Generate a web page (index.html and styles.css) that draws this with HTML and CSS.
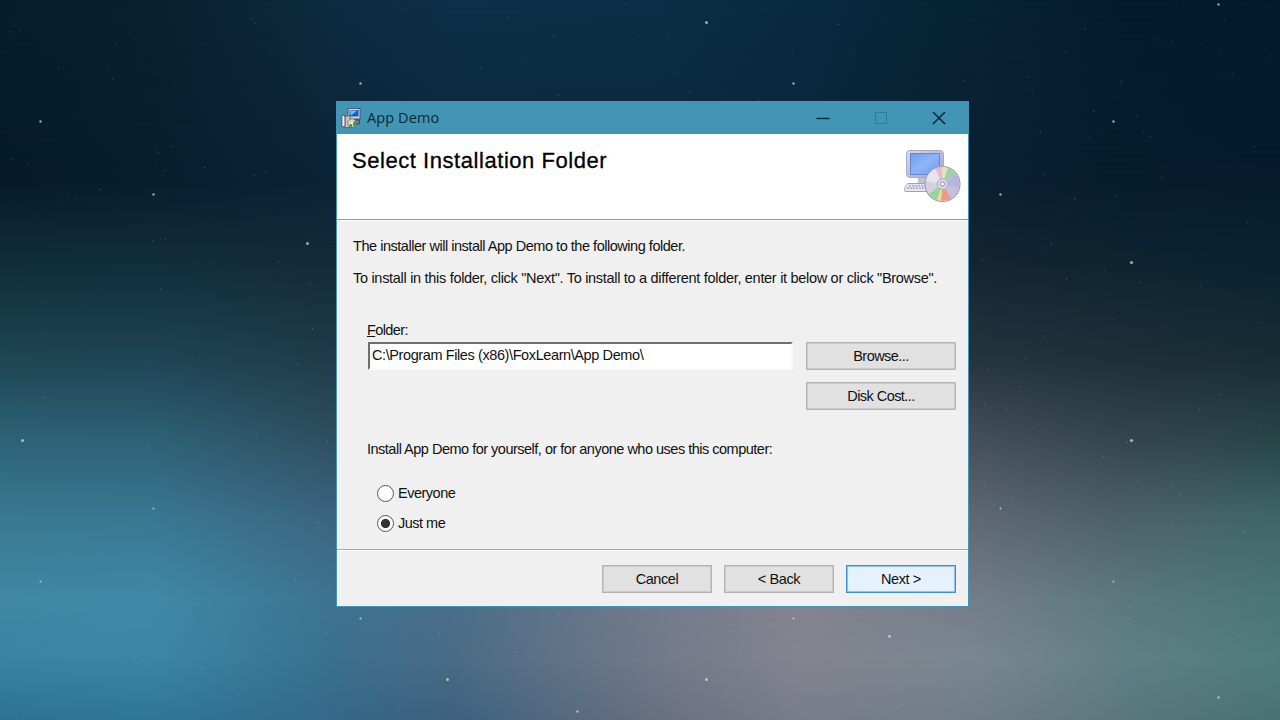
FILE: index.html
```html
<!DOCTYPE html>
<html lang="en">
<head>
  <meta charset="UTF-8">
  <meta name="viewport" content="width=device-width, initial-scale=1">
  <title>App Demo</title>
  <link rel="stylesheet" href="styles.css">
</head>
<body>
  <div class="sky" id="sky"></div>
  <svg class="stars" id="stars" width="1280" height="720" aria-hidden="true"></svg>

  <main class="window">
    <header class="titlebar">
      <svg class="app-icon" width="20" height="20" viewBox="0 0 20 20">
        <rect x="7" y="0.5" width="12" height="10.5" fill="#d5d4e0" stroke="#3b4657" stroke-width="0.8"/>
        <rect x="8.5" y="2" width="9" height="6.5" fill="#1261bd"/>
        <path d="M9 2.500h7l-6 5z" fill="#72c0f4"/>
        <path d="M9 12h9.500v4H15z" fill="#7f7899" stroke="#322f42" stroke-width="0.7"/>
        <rect x="4" y="8" width="5" height="11.500" fill="#c9c7c7" stroke="#525966" stroke-width="0.8"/>
        <path d="M0.800 8l2-1 1.200 2v9l-2 1-1.200-1z" fill="#eceaea" stroke="#3b4250" stroke-width="0.8"/>
        <circle cx="11" cy="15" r="4.300" fill="#d9d7a8" stroke="#50584a" stroke-width="0.6"/>
        <path d="M11 15l3.500-2.500A4.300 4.300 0 0 1 13 18.700zM11 15l-3.500 2.500A4.300 4.300 0 0 0 11 19.300z" fill="#4c9b52"/>
        <circle cx="11" cy="15" r="1.200" fill="#fff"/>
      </svg>
      <span class="title">App Demo</span>
      <div class="controls">
        <svg width="14" height="14" viewBox="0 0 14 14"><path d="M0.5 7.5h13" stroke="#092734" stroke-width="1.4"/></svg>
        <svg width="14" height="14" viewBox="0 0 14 14"><rect x="1.5" y="1.5" width="11" height="11" fill="none" stroke="#2c7c9b"/></svg>
        <svg width="14" height="14" viewBox="0 0 14 14"><path d="M1 1l12 12M13 1L1 13" stroke="#092734" stroke-width="1.5"/></svg>
      </div>
    </header>

    <section class="banner">
      <h1>Select Installation Folder</h1>
      <svg class="banner-icon" width="60" height="56" viewBox="0 0 60 56">
        <defs>
          <linearGradient id="screen" x1="0" y1="0" x2="1" y2="1">
            <stop offset="0" stop-color="#6f9df0"/>
            <stop offset="0.5" stop-color="#8fb5f8"/>
            <stop offset="1" stop-color="#6c97ef"/>
          </linearGradient>
          <linearGradient id="bezel" x1="0" y1="0" x2="1" y2="1">
            <stop offset="0" stop-color="#d8d9ec"/>
            <stop offset="1" stop-color="#9fa2c9"/>
          </linearGradient>
        </defs>
        <path d="M16 28h16v7H16z" fill="#c2c3d8"/>
        <rect x="4.5" y="2.5" width="37" height="27" rx="3.5" fill="url(#bezel)" stroke="#a9abc4"/>
        <rect x="8.5" y="5.5" width="29" height="21" fill="url(#screen)" stroke="#6485d2"/>
        <path d="M6 35.500h24l1 8H3c-1.500-2 .5-6 3-8z" fill="#e6e6ee" stroke="#a3a3b5"/>
        <path d="M7 37.800h22M5 40.200h23" stroke="#9c9cad" stroke-width="1.200" stroke-dasharray="2 1"/>
        <circle cx="40.500" cy="36" r="17.500" fill="#d6d1df" stroke="#a39fb8" stroke-width="1.200"/>
        <path d="M40.500 36L33 20.800A17 17 0 0 1 40 19z" fill="#e9b7d3"/>
        <path d="M40.500 36L40 19a17 17 0 0 1 6 1z" fill="#e5e4c0"/>
        <path d="M40.500 36L46 20a17 17 0 0 1 8 6z" fill="#9bd3a6"/>
        <path d="M40.500 36L54 26a17 17 0 0 1 3 14z" fill="#bbb3df"/>
        <path d="M40.500 36L57 40a17 17 0 0 1-8 10.500z" fill="#c7bedb"/>
        <path d="M40.500 36L49 50.500a17 17 0 0 1-10 2.300z" fill="#e89b89"/>
        <path d="M40.500 36L39 52.800a17 17 0 0 1-4-1z" fill="#efdc8c"/>
        <path d="M40.500 36L35 51.800a17 17 0 0 1-8-6z" fill="#96d79c"/>
        <path d="M40.500 36L24 33a17 17 0 0 1 9-12.200z" fill="#e6e4ec"/>
        <circle cx="40.500" cy="36" r="5.500" fill="#d4d4e2" stroke="#aeadc3"/>
        <circle cx="40.500" cy="36" r="2" fill="#fff" stroke="#8f91a9"/>
      </svg>
    </section>

    <section class="content">
      <p class="intro">The installer will install App Demo to the following folder.</p>
      <p class="hint">To install in this folder, click "Next". To install to a different folder, enter it below or click "Browse".</p>

      <div class="folder">
        <div class="folder-field">
          <label for="folder"><u>F</u>older:</label>
          <input id="folder" type="text" value="C:\Program Files (x86)\FoxLearn\App Demo\" spellcheck="false">
        </div>
        <div class="folder-buttons">
          <button type="button">Browse...</button>
          <button type="button">Disk Cost...</button>
        </div>
      </div>

      <p class="question">Install App Demo for yourself, or for anyone who uses this computer:</p>
      <div class="options">
        <label class="option"><input type="radio" name="scope"><span>Everyone</span></label>
        <label class="option"><input type="radio" name="scope" checked><span>Just me</span></label>
      </div>
    </section>

    <footer class="footer">
      <button type="button">Cancel</button>
      <button type="button">&lt; Back</button>
      <button type="button" class="primary">Next &gt;</button>
    </footer>
  </main>

  <script>
    // sky colours by height, each row fades into the next one
    const stops = [0, 150, 335, 450, 650, 800, 969, 1120, 1280];
    const rows = [
      [0, '#051f2b', '#07212f', '#0f2b40', '#0e2f48', '#0c2f47', '#0a2a40', '#072335', '#041c2f', '#031a2e'],
      [180, '#061b2a', '#071e2e', '#0b2338', '#0c283d', '#0c283d', '#0b253a', '#0a2033', '#061d2d', '#061c2d'],
      [260, '#102d39', '#112d3c', '#132b38', '#172d38', '#172d38', '#172a35', '#132532', '#0e2430', '#0a2231'],
      [360, '#1f4654', '#1f4556', '#213b4a', '#2a3d4b', '#2a3d4b', '#2a3843', '#253540', '#1e303a', '#182d35'],
      [440, '#2d6376', '#2e6275', '#2f4f61', '#3b5060', '#485262', '#4a525d', '#45505b', '#34464f', '#284548'],
      [520, '#3b7a91', '#3a7894', '#3b667f', '#46667f', '#5c6c7e', '#68707c', '#616973', '#4c6268', '#41676a'],
      [600, '#3f88a5', '#4089a8', '#3d7391', '#4a6e88', '#727a8b', '#84848f', '#747e8a', '#5c797f', '#4a7577'],
      [660, '#3984a3', '#3a86a8', '#3a708e', '#4a6b85', '#71798a', '#83848f', '#7a8790', '#617f86', '#4f7c7b'],
      [719, '#2c7293', '#2f7699', '#346889', '#3d617e', '#676f80', '#797d8a', '#717e88', '#5b777e', '#497275']
    ];
    let prev = 0;
    document.getElementById('sky').innerHTML = rows.map(([y, ...colors]) => {
      const gradient = colors.map((c, i) => `${c} ${stops[i]}px`).join(', ');
      const fade = y ? `mask-image: linear-gradient(to bottom, transparent ${prev}px, #000 ${y}px);` : '';
      prev = y;
      return `<div class="band" style="background: linear-gradient(to right, ${gradient}); ${fade}"></div>`;
    }).join('');

    // bright stars: x, y, radius
    const bright = [
      [706, 22, 1.5], [360, 83, 1.2], [793, 83, 1.2], [40, 121, 1.2], [1113, 121, 1.2],
      [153, 194, 1.2], [1000, 194, 1.2], [307, 243, 1.5], [1131, 262, 1.6], [22, 440, 1.6],
      [1131, 440, 1.6], [153, 508, 1], [1000, 508, 1], [40, 581, 1], [1113, 581, 1],
      [360, 618, 1.1], [793, 618, 1.1], [889, 636, 1.4], [447, 679, 1.5], [706, 679, 1.5],
      [1218, 4, 1.2], [1218, 697, 1.2], [577, 711, 1.2]
    ];
    let out = '';
    let seed = 7;
    function rand() {
      seed = (seed * 16807) % 2147483647;
      return seed / 2147483647;
    }
    // faint dust
    for (let i = 0; i < 420; i++) {
      out += `<circle cx="${(2 + rand() * 1276).toFixed(1)}" cy="${(2 + rand() * 716).toFixed(1)}" r="0.7" opacity="${(0.08 + rand() * 0.2).toFixed(2)}"/>`;
    }
    bright.forEach(([x, y, r]) => {
      out += `<circle cx="${x + 0.5}" cy="${y + 0.5}" r="${r}" opacity="0.7"/>`;
    });
    document.getElementById('stars').innerHTML = out;
  </script>
</body>
</html>
```

FILE: styles.css
```css
* {
  box-sizing: border-box;
}
body {
  margin: 0;
  width: 1280px;
  height: 720px;
  overflow: hidden;
  padding: 101px 311px 0 336px;
  font-family: "Liberation Sans", Arial, sans-serif;
  font-size: 14.5px;
  letter-spacing: -0.3px;
  color: #111;
  background: #0c283d;
}
.sky {
  position: absolute;
  left: 0;
  top: 0;
  width: 1280px;
  height: 720px;
}
.band {
  position: absolute;
  inset: 0;
}
.stars {
  position: absolute;
  left: 0;
  top: 0;
  fill: #d3e6ee;
}
.window {
  position: relative;
  width: 633px;
  height: 506px;
  display: flex;
  flex-direction: column;
  background: #f0f0f0;
  border: 1px solid #4295b4;
}
.titlebar {
  height: 32px;
  display: flex;
  align-items: center;
  padding: 0 22px 1px 4px;
  background: #4295b4;
}
.title {
  margin: -1px 0 0 6px;
  font-family: "Open Sans", "Noto Sans", sans-serif;
  font-size: 14.5px;
  letter-spacing: 0.1px;
  color: #0a2836;
}
.controls {
  display: flex;
  gap: 44px;
  margin-left: auto;
}
.controls svg {
  display: block;
}
.banner {
  height: 86px;
  display: flex;
  justify-content: space-between;
  padding: 14px 6px 0 15px;
  background: #fff;
  border-bottom: 1px solid #9d9d9d;
}
h1 {
  margin: 0;
  font-size: 22px;
  font-weight: normal;
  line-height: 26px;
  letter-spacing: 0.55px;
  color: #000;
  -webkit-text-stroke: 0.3px #000;
}
.content {
  height: 330px;
  padding: 15px 12px 0 16px;
  border-top: 1px solid #fafafa;
  border-bottom: 1px solid #a9a9a9;
}
p {
  margin: 0;
  line-height: 20px;
  white-space: nowrap;
}
.intro {
  letter-spacing: -0.47px;
}
.hint {
  margin-top: 12px;
}
.folder {
  display: flex;
  justify-content: space-between;
  margin: 32px 0 0 14px;
}
.folder-field label {
  display: block;
  height: 22px;
  line-height: 20px;
  letter-spacing: -0.6px;
}
.folder-field input {
  display: block;
  width: 425px;
  height: 28px;
  margin-left: 1px;
  padding: 0 2px 3px;
  font: inherit;
  letter-spacing: -0.4px;
  color: #111;
  background: #fff;
  border: 2px solid;
  border-color: #6f6f6f #fafafa #fafafa #6f6f6f;
  outline: none;
}
.folder-buttons {
  display: flex;
  flex-direction: column;
  gap: 12px;
  padding-top: 22px;
}
button {
  width: 110px;
  height: 28px;
  padding: 0;
  font: inherit;
  letter-spacing: -0.4px;
  color: #111;
  background: #e1e1e1;
  border: 1px solid #b3b3b3;
  box-shadow: inset 0 0 0 1px #cbcbcb;
}
.folder-buttons button {
  width: 150px;
  letter-spacing: -0.55px;
}
.question {
  margin: 29px 0 0 14px;
  letter-spacing: -0.5px;
}
.options {
  display: flex;
  flex-direction: column;
  gap: 10px;
  margin: 24px 0 0 24px;
  letter-spacing: -0.5px;
}
.option {
  display: flex;
  align-items: center;
  gap: 4px;
  height: 20px;
}
.option input {
  appearance: none;
  width: 17px;
  height: 17px;
  margin: 0;
  border: 1.5px solid #555;
  border-radius: 50%;
  background: #fff;
}
.option input:checked {
  background: radial-gradient(circle, #333 4.2px, #fff 5px);
}
.footer {
  flex: 1;
  display: flex;
  justify-content: flex-end;
  gap: 12px;
  padding: 14px 12px 0 0;
  border-top: 1px solid #fff;
}
.primary {
  background: #e5f1fb;
  border-color: #3c8fd3;
  box-shadow: inset 0 0 0 1px #8fc0e8;
}
```
